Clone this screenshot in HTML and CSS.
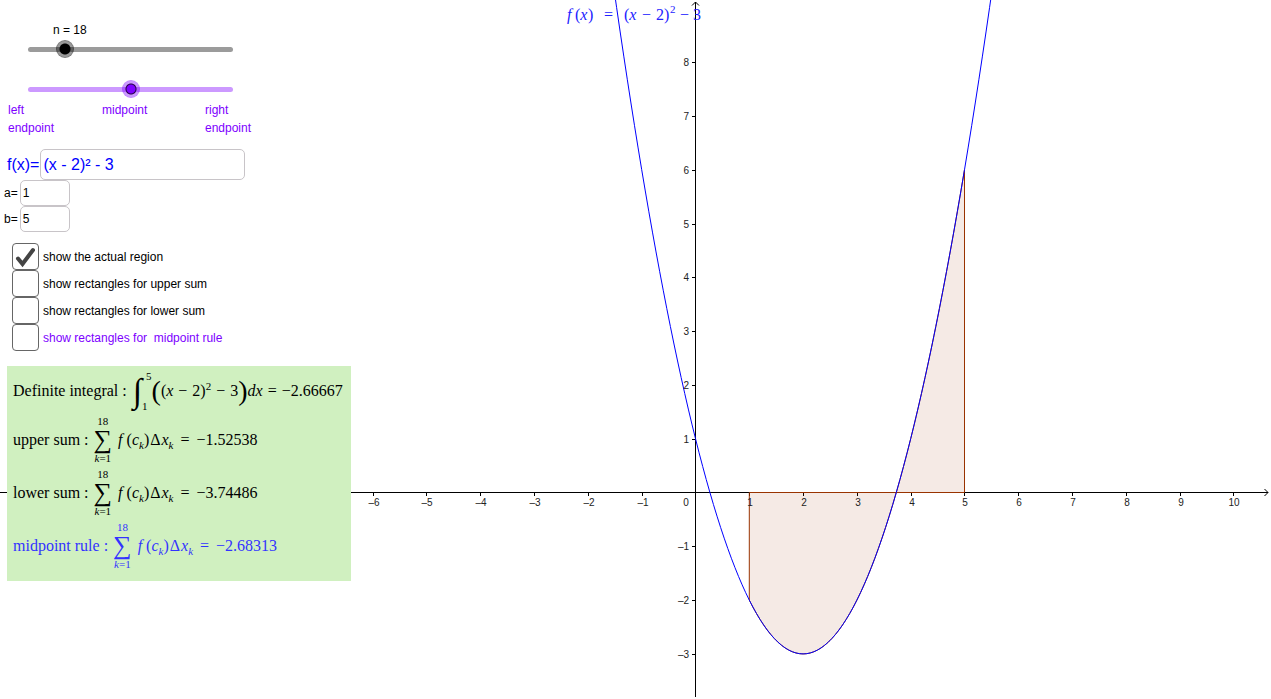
FILE: index.html
```html
<!DOCTYPE html>
<html lang="en">
<head>
    <meta charset="UTF-8">
    <meta name="viewport" content="width=device-width, initial-scale=1.0">
    <title>Riemann Sums</title>
    <link rel="stylesheet" href="styles.css">
</head>
<body>
    <div class="applet">
        <svg class="graph" viewBox="0 0 1271 699" preserveAspectRatio="xMinYMin meet">
            <g id="axes" class="axes">
                <path d="M0 492.500H1268M695.500 2V697"/>
                <path d="M1264.500 489L1268 492.500L1264.500 496M692 5.500L695.500 2L699 5.500"/>
            </g>
            <path id="region" class="region"/>
            <path id="curve" class="curve"/>
            <g id="labels" class="tick-labels">
                <text x="686" y="506">0</text>
            </g>
            <text class="function-label" y="20"><tspan class="var" x="567">f</tspan><tspan x="575">(</tspan><tspan class="var">x</tspan><tspan x="588">)</tspan><tspan x="604">=</tspan><tspan x="624">(</tspan><tspan class="var">x</tspan><tspan x="642">−</tspan><tspan x="656">2)</tspan><tspan class="power" x="670" y="13">2</tspan><tspan x="680" y="20">−</tspan><tspan x="693">3</tspan></text>
        </svg>

        <form class="controls">
            <label class="n-label" for="n">n = <span id="nValue">18</span></label>
            <div class="slider">
                <input type="range" id="n" min="0" max="100" value="18">
            </div>
            <div class="slider purple">
                <input type="range" id="position" min="0" max="1" step="0.1" value="0.5" aria-label="sample point">
            </div>
            <div class="positions">
                <span>left endpoint</span>
                <span>midpoint</span>
                <span>right endpoint</span>
            </div>

            <div class="field function">
                <label for="fx">f(x)=</label>
                <input type="text" id="fx" value="(x - 2)² - 3">
            </div>
            <div class="field">
                <label for="a">a=</label>
                <input type="text" id="a" value="1">
            </div>
            <div class="field">
                <label for="b">b=</label>
                <input type="text" id="b" value="5">
            </div>

            <div class="options">
                <label><input type="checkbox" checked>show the actual region</label>
                <label><input type="checkbox">show rectangles for upper sum</label>
                <label><input type="checkbox">show rectangles for lower sum</label>
                <label class="purple-text"><input type="checkbox">show rectangles for &nbsp;midpoint rule</label>
            </div>

            <div class="results">
                <div class="result integral">
                    <span class="name">Definite integral :</span>
                    <span class="int">∫</span>
                    <span class="limits"><span>5</span><span>1</span></span>
                    <span class="paren">(</span>
                    <span>(<i>x</i> <span class="op">−</span> 2)<sup>2</sup> <span class="op">−</span> 3</span>
                    <span class="paren">)</span>
                    <span class="value"><i>dx</i> <span class="op">=</span> −2.66667</span>
                </div>
                <div class="result">
                    <span class="name">upper sum :</span>
                    <span class="sum"><small>18</small><b>∑</b><small><i>k</i>=1</small></span>
                    <span class="value"><i>f</i> (<i>c<sub>k</sub></i>)<span class="delta">Δ</span><i>x<sub>k</sub></i> <span class="op">=</span> −1.52538</span>
                </div>
                <div class="result">
                    <span class="name">lower sum :</span>
                    <span class="sum"><small>18</small><b>∑</b><small><i>k</i>=1</small></span>
                    <span class="value"><i>f</i> (<i>c<sub>k</sub></i>)<span class="delta">Δ</span><i>x<sub>k</sub></i> <span class="op">=</span> −3.74486</span>
                </div>
                <div class="result midpoint">
                    <span class="name">midpoint rule :</span>
                    <span class="sum"><small>18</small><b>∑</b><small><i>k</i>=1</small></span>
                    <span class="value"><i>f</i> (<i>c<sub>k</sub></i>)<span class="delta">Δ</span><i>x<sub>k</sub></i> <span class="op">=</span> −2.68313</span>
                </div>
            </div>
        </form>
    </div>

    <script>
        const unit = 53.8;
        const originX = 695.5;
        const originY = 492.5;
        const axes = document.getElementById('axes');
        const labels = document.getElementById('labels');

        function add(parent, name, attrs, text) {
            const el = document.createElementNS('http://www.w3.org/2000/svg', name);
            for (const key in attrs) {
                el.setAttribute(key, attrs[key]);
            }
            el.textContent = text || '';
            parent.appendChild(el);
        }

        function format(i) {
            return i < 0 ? '–' + -i : String(i);
        }

        function f(x) {
            return (x - 2) * (x - 2) - 3;
        }

        // points of the graph of f from one x to another
        function plot(from, to) {
            const steps = 120;
            const points = [];
            for (let i = 0; i <= steps; i++) {
                const x = from + (to - from) * i / steps;
                points.push((originX + x * unit) + ' ' + (originY - f(x) * unit));
            }
            return points.join('L');
        }

        document.getElementById('curve').setAttribute('d', 'M' + plot(-2, 6));
        document.getElementById('region').setAttribute('d',
            `M${originX + unit} ${originY}L${plot(1, 5)}V${originY}Z`);

        // x axis
        for (let i = -6; i <= 10; i++) {
            if (i === 0) continue;
            const x = Math.round(originX + i * unit - 0.2) + 0.5;
            add(axes, 'path', { d: `M${x} 492v4` });
            add(labels, 'text', { x: x + 0.5, y: 506 }, format(i));
        }

        // y axis
        for (let i = -3; i <= 8; i++) {
            if (i === 0) continue;
            const y = Math.round(originY - i * unit) + 0.5;
            add(axes, 'path', { d: `M692 ${y}h4` });
            add(labels, 'text', { x: 689, y: y + 3.5, class: 'y-label' }, format(i));
        }

        document.getElementById('n').addEventListener('input', function(e) {
            document.getElementById('nValue').textContent = e.target.value;
        });
    </script>
</body>
</html>
```
FILE: styles.css
```css
body {
    margin: 0;
    background-color: #fff;
    color: #000;
    font-family: "Liberation Sans", Arial, sans-serif;
    font-size: 12px;
}
.applet {
    display: grid;
    min-height: 100vh;
}
.graph {
    grid-area: 1 / 1;
    display: block;
    width: 100%;
    height: 100vh;
}
.controls {
    grid-area: 1 / 1;
    justify-self: start;
    z-index: 1;
    padding-top: 22px;
}

/* graph */
.axes {
    fill: none;
    stroke: #000;
    stroke-width: 1;
}
.region {
    fill: #993300;
    fill-opacity: 0.1;
    stroke: #993300;
    stroke-width: 1;
}
.curve {
    fill: none;
    stroke: #0000ff;
    stroke-width: 1;
}
.tick-labels {
    font-size: 10px;
    fill: #222;
    text-anchor: middle;
}
.y-label {
    text-anchor: end;
}
.function-label {
    font-family: "Liberation Serif", "Times New Roman", serif;
    font-size: 16px;
    fill: #2222ff;
}
.function-label .var {
    font-style: italic;
}
.function-label .power {
    font-size: 11px;
}

/* sliders */
.n-label {
    display: block;
    margin-left: 53px;
    height: 17px;
    line-height: 17px;
}
.slider {
    position: relative;
    width: 223px;
    height: 20px;
    margin: 0 0 20px 19px;
    color: #000;
}
.slider::before {
    content: "";
    position: absolute;
    top: 8px;
    left: 9px;
    right: 9px;
    height: 5px;
    border-radius: 3px;
    background-color: #9b9b9b;
}
.slider input {
    -webkit-appearance: none;
    appearance: none;
    position: relative;
    display: block;
    width: 100%;
    height: 20px;
    margin: 0;
    background: none;
}
.slider input::-webkit-slider-thumb {
    -webkit-appearance: none;
    width: 18px;
    height: 18px;
    border: 1px solid rgba(0,0,0,0.2);
    border-radius: 50%;
    background: radial-gradient(circle, #000 5px, rgba(0,0,0,0.4) 6px);
}
.slider.purple {
    margin-bottom: 0;
}
.slider.purple::before {
    background-color: #cc99ff;
}
.slider.purple input::-webkit-slider-thumb {
    border-color: rgba(125,0,255,0.1);
    background: radial-gradient(circle, #7d00ff 4px, #220044 5px, rgba(125,0,255,0.4) 6px);
}
.positions {
    display: grid;
    grid-template-columns: 94px 103px 60px;
    margin-left: 8px;
    padding-top: 2px;
    line-height: 18px;
    color: #7d00ff;
}
.positions span {
    max-width: 60px;
}

/* input boxes */
.field {
    display: flex;
    align-items: center;
    margin-left: 4px;
    height: 26px;
}
.field input {
    box-sizing: border-box;
    width: 50px;
    height: 26px;
    margin-left: 2px;
    padding: 0 2px;
    border: 1px solid #c8c4c8;
    border-radius: 5px;
    background-color: #fff;
    color: #000;
    font-family: inherit;
    font-size: 12px;
}
.field.function {
    margin-left: 7px;
    margin-top: 12px;
    height: 31px;
    color: #0000ff;
    font-size: 16px;
}
.field.function input {
    width: 205px;
    height: 31px;
    margin-left: 1px;
    color: #0000ff;
    font-size: 16px;
}

/* check boxes */
.options {
    margin: 11px 0 15px 12px;
}
.options label {
    display: flex;
    align-items: center;
    gap: 4px;
    height: 27px;
}
.options input {
    -webkit-appearance: none;
    appearance: none;
    box-sizing: border-box;
    width: 27px;
    height: 27px;
    margin: 0;
    border: 1px solid #666;
    border-radius: 4px;
    background-color: #fff;
}
.options input:checked {
    background-image: url("data:image/svg+xml,%3Csvg xmlns='http://www.w3.org/2000/svg' viewBox='0 0 25 25'%3E%3Cpath d='M5 14.500L9.500 20L20 6' fill='none' stroke='%23444' stroke-width='4' stroke-linecap='round'/%3E%3C/svg%3E");
}
.purple-text {
    color: #7d00ff;
}

/* results */
.results {
    box-sizing: border-box;
    width: 344px;
    margin-left: 7px;
    padding: 0 6px 9px;
    background-color: #d0f0c0;
    font-family: "Liberation Serif", "Times New Roman", serif;
    font-size: 16px;
}
.result {
    display: flex;
    align-items: center;
    height: 53px;
    white-space: nowrap;
}
.result.integral {
    height: 47px;
    padding-top: 2px;
    box-sizing: border-box;
}
.result.midpoint {
    color: #3333ff;
}
.result sup,
.result sub {
    font-size: 11px;
    line-height: 0;
}
.op {
    margin: 0 1px;
}
.delta {
    margin: 0 1px;
}
.int {
    margin-left: 6px;
    font-size: 34px;
    font-style: italic;
    line-height: 40px;
}
.limits {
    display: flex;
    flex-direction: column;
    justify-content: space-between;
    height: 42px;
    font-size: 11px;
    line-height: 12px;
}
.limits span:first-child {
    padding-left: 4px;
}
.paren {
    font-size: 28px;
    line-height: 32px;
}
.sum {
    display: flex;
    flex-direction: column;
    align-items: center;
    margin: 0 6px 0 5px;
}
.sum b {
    font-size: 26px;
    font-weight: normal;
    line-height: 24px;
}
.sum small {
    font-size: 11px;
    line-height: 13px;
}
.sum + .value .op {
    margin: 0 3px;
}
```
